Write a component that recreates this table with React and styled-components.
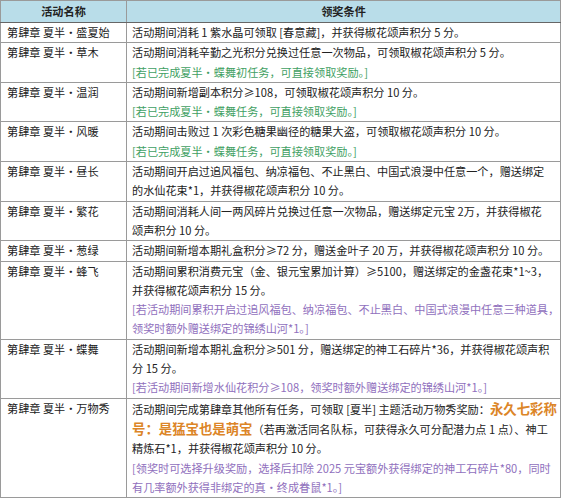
import React from "react";
import styled, { createGlobalStyle } from "styled-components";

const GlobalStyle = createGlobalStyle`
  html, body {
    margin: 0;
    padding: 0;
    background: #fff;
  }
`;

const tones = {
  plain: "#222",
  green: "#3f9f63",
  purple: "#9070bd",
};

const Table = styled.table`
  width: 561px;
  border-collapse: collapse;
  table-layout: fixed;
  font-family: "Noto Sans CJK SC", "Noto Sans", sans-serif;
  font-size: 11.15px;
  color: #222;
  border: 1px solid #8a8a8a;

  td,
  th {
    border: 1px solid #9a9a9a;
  }
`;

const HeadCell = styled.th`
  width: ${(p) => (p.$width ? p.$width + "px" : "auto")};
  height: 21px;
  padding: 0;
  background: #b9dde9;
  font-weight: bold;
  text-align: center;
  line-height: 21px;
  border-bottom-color: #666 !important;
`;

const NameCell = styled.td`
  vertical-align: top;
  padding: 0 0 0 6px;
  line-height: 19.3px;
  white-space: nowrap;
`;

const CondCell = styled.td`
  vertical-align: top;
  padding: 0 0 0 5px;
`;

const Line = styled.div`
  line-height: 19.3px;
  white-space: nowrap;
  color: ${(p) => tones[p.$tone]};
`;

const Highlight = styled.span`
  color: #dc8527;
  font-weight: bold;
  font-size: 13.4px;
`;

const rows = [
  {
    name: "第肆章 夏半・盛夏始",
    lines: [["plain", "活动期间消耗 1 紫水晶可领取 [春意藏]，并获得椒花颂声积分 5 分。"]],
  },
  {
    name: "第肆章 夏半・草木",
    lines: [
      ["plain", "活动期间消耗辛勤之光积分兑换过任意一次物品，可领取椒花颂声积分 5 分。"],
      ["green", "[若已完成夏半・蝶舞初任务，可直接领取奖励。]"],
    ],
  },
  {
    name: "第肆章 夏半・温润",
    lines: [
      ["plain", "活动期间新增副本积分≥108，可领取椒花颂声积分 10 分。"],
      ["green", "[若已完成夏半・蝶舞任务，可直接领取奖励。]"],
    ],
  },
  {
    name: "第肆章 夏半・风暖",
    lines: [
      ["plain", "活动期间击败过 1 次彩色糖果幽径的糖果大盗，可领取椒花颂声积分 10 分。"],
      ["green", "[若已完成夏半・蝶舞任务，可直接领取奖励。]"],
    ],
  },
  {
    name: "第肆章 夏半・昼长",
    lines: [
      ["plain", "活动期间开启过追风福包、纳凉福包、不止黑白、中国式浪漫中任意一个，赠送绑定"],
      ["plain", "的水仙花束*1，并获得椒花颂声积分 10 分。"],
    ],
  },
  {
    name: "第肆章 夏半・繁花",
    lines: [
      ["plain", "活动期间消耗人间一两风碎片兑换过任意一次物品，赠送绑定元宝 2万，并获得椒花"],
      ["plain", "颂声积分 10 分。"],
    ],
  },
  {
    name: "第肆章 夏半・葱绿",
    lines: [["plain", "活动期间新增本期礼盒积分≥72 分，赠送金叶子 20 万，并获得椒花颂声积分 10 分。"]],
  },
  {
    name: "第肆章 夏半・蜂飞",
    lines: [
      ["plain", "活动期间累积消费元宝（金、银元宝累加计算）≥5100，赠送绑定的金盏花束*1~3，"],
      ["plain", "并获得椒花颂声积分 15 分。"],
      ["purple", "[若活动期间累积开启过追风福包、纳凉福包、不止黑白、中国式浪漫中任意三种道具，"],
      ["purple", "领奖时额外赠送绑定的锦绣山河*1。]"],
    ],
  },
  {
    name: "第肆章 夏半・蝶舞",
    lines: [
      ["plain", "活动期间新增本期礼盒积分≥501 分，赠送绑定的神工石碎片*36，并获得椒花颂声积"],
      ["plain", "分 15 分。"],
      ["purple", "[若活动期间新增水仙花积分≥108，领奖时额外赠送绑定的锦绣山河*1。]"],
    ],
  },
  {
    name: "第肆章 夏半・万物秀",
    lines: [
      [
        "plain",
        <>
          活动期间完成第肆章其他所有任务，可领取 [夏半] 主题活动万物秀奖励：
          <Highlight>永久七彩称</Highlight>
        </>,
      ],
      [
        "plain",
        <>
          <Highlight>号：是猛宝也是萌宝</Highlight>（若再激活同名队标，可获得永久可分配潜力点 1 点）、神工
        </>,
      ],
      ["plain", "精炼石*1，并获得椒花颂声积分 10 分。"],
      ["purple", "[领奖时可选择升级奖励，选择后扣除 2025 元宝额外获得绑定的神工石碎片*80，同时"],
      ["purple", "有几率额外获得非绑定的真・终成眷鼠*1。]"],
    ],
  },
];

function App() {
  return (
    <>
      <GlobalStyle />
      <Table>
        <thead>
          <tr>
            <HeadCell $width={125}>活动名称</HeadCell>
            <HeadCell>领奖条件</HeadCell>
          </tr>
        </thead>
        <tbody>
          {rows.map((row, index) => (
            <tr key={index}>
              <NameCell>{row.name}</NameCell>
              <CondCell>
                {row.lines.map(([tone, text], i) => (
                  <Line key={i} $tone={tone}>
                    {text}
                  </Line>
                ))}
              </CondCell>
            </tr>
          ))}
        </tbody>
      </Table>
    </>
  );
}

export default App;
